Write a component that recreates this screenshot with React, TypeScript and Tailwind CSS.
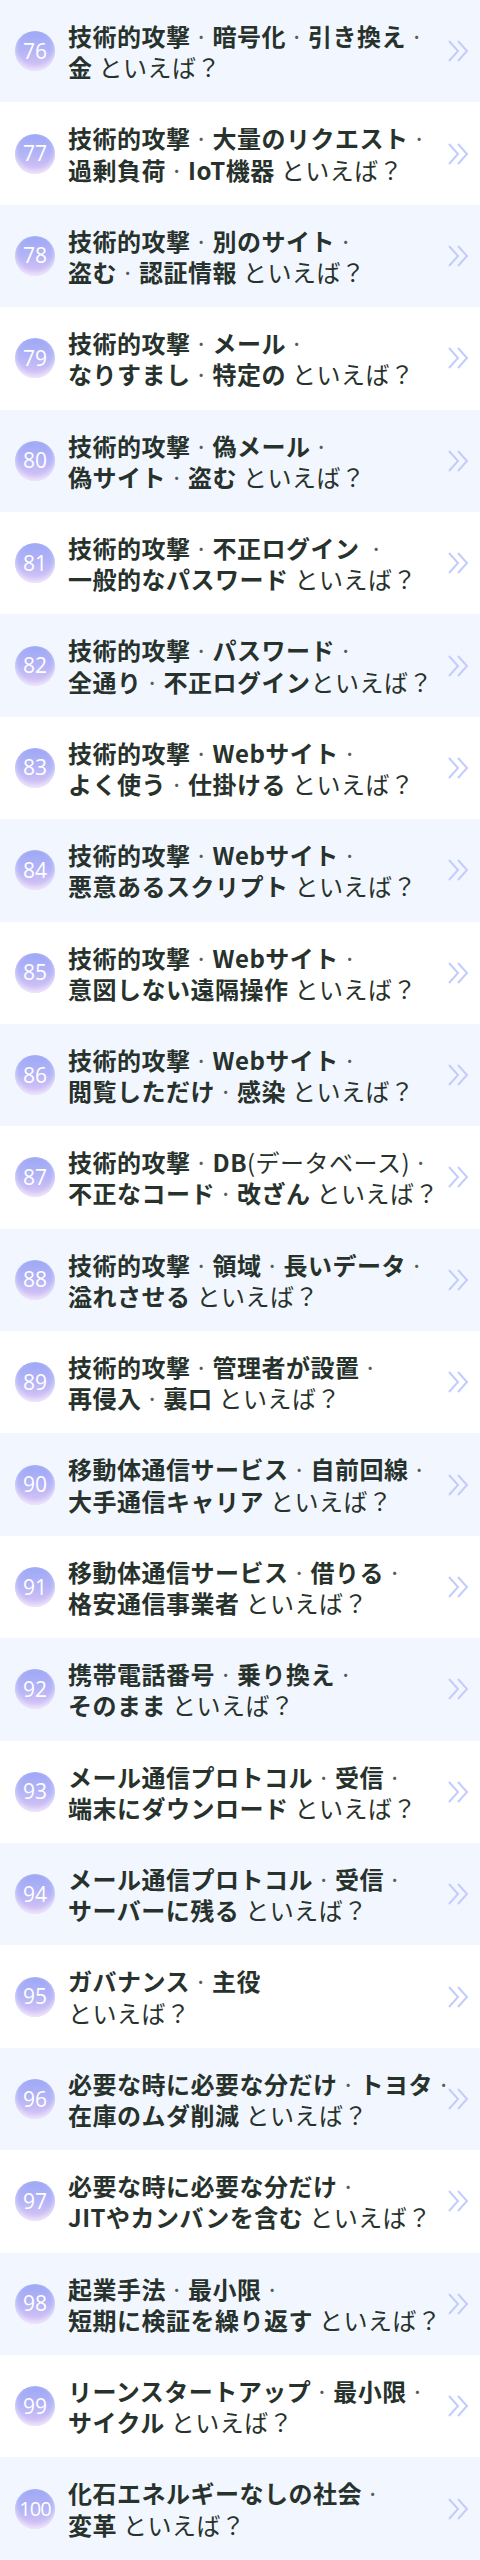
import { Fragment } from "react";

// "**bold**" segments, "\n" = line break
const items: string[] = [
  "**技術的攻撃**・**暗号化**・**引き換え**・\n**金** といえば？",
  "**技術的攻撃**・**大量のリクエスト**・\n**過剰負荷**・**IoT機器** といえば？",
  "**技術的攻撃**・**別のサイト**・\n**盗む**・**認証情報** といえば？",
  "**技術的攻撃**・**メール**・\n**なりすまし**・**特定の** といえば？",
  "**技術的攻撃**・**偽メール**・\n**偽サイト**・**盗む** といえば？",
  "**技術的攻撃**・**不正ログイン** ・\n**一般的なパスワード** といえば？",
  "**技術的攻撃**・**パスワード**・\n**全通り**・**不正ログイン**といえば？",
  "**技術的攻撃**・**Webサイト**・\n**よく使う**・**仕掛ける** といえば？",
  "**技術的攻撃**・**Webサイト**・\n**悪意あるスクリプト** といえば？",
  "**技術的攻撃**・**Webサイト**・\n**意図しない遠隔操作** といえば？",
  "**技術的攻撃**・**Webサイト**・\n**閲覧しただけ**・**感染** といえば？",
  "**技術的攻撃**・**DB**(データベース)・\n**不正なコード**・**改ざん** といえば？",
  "**技術的攻撃**・**領域**・**長いデータ**・\n**溢れさせる** といえば？",
  "**技術的攻撃**・**管理者が設置**・\n**再侵入**・**裏口** といえば？",
  "**移動体通信サービス**・**自前回線**・\n**大手通信キャリア** といえば？",
  "**移動体通信サービス**・**借りる**・\n**格安通信事業者** といえば？",
  "**携帯電話番号**・**乗り換え**・\n**そのまま** といえば？",
  "**メール通信プロトコル**・**受信**・\n**端末にダウンロード** といえば？",
  "**メール通信プロトコル**・**受信**・\n**サーバーに残る** といえば？",
  "**ガバナンス**・**主役**\nといえば？",
  "**必要な時に必要な分だけ**・**トヨタ**・\n**在庫のムダ削減** といえば？",
  "**必要な時に必要な分だけ**・\n**JITやカンバンを含む** といえば？",
  "**起業手法**・**最小限**・\n**短期に検証を繰り返す** といえば？",
  "**リーンスタートアップ**・**最小限**・\n**サイクル** といえば？",
  "**化石エネルギーなしの社会**・\n**変革** といえば？",
];

function Dot() {
  return (
    <span className="inline-block w-[22px] text-center font-normal text-[#555c58]">
      ·
    </span>
  );
}

function Plain({ text }: { text: string }) {
  const bits = text.split("・");
  return (
    <>
      {bits.map((b, i) => (
        <Fragment key={i}>
          {i > 0 && <Dot />}
          <span className="font-normal">{b}</span>
        </Fragment>
      ))}
    </>
  );
}

function Line({ text }: { text: string }) {
  const parts = text.split("**");
  return (
    <span className="block whitespace-nowrap">
      {parts.map((p, i) =>
        i % 2 === 1 ? (
          <strong key={i} className="font-bold">
            {p}
          </strong>
        ) : (
          <Plain key={i} text={p} />
        )
      )}
    </span>
  );
}

function Chevrons() {
  return (
    <svg viewBox="0 0 24 24" className="w-[24px] h-[24px]" fill="none">
      <path d="M3 2l9 10-9 10" stroke="#c3ccfb" strokeWidth="2" />
      <path d="M12 2l9 10-9 10" stroke="#c3ccfb" strokeWidth="2" />
    </svg>
  );
}

export default function App() {
  return (
    <div className="w-[480px] font-['Noto_Sans_CJK_JP','Noto_Sans',sans-serif] text-[#28322c]">
      <ul>
        {items.map((item, idx) => {
          const num = 76 + idx;
          return (
            <li
              key={num}
              className={
                idx % 2 === 0
                  ? "flex items-center h-[102.4px] pl-[15px] pr-[10px] bg-[#f2f7ff]"
                  : "flex items-center h-[102.4px] pl-[15px] pr-[10px] bg-white"
              }
            >
              <div className="size-10 shrink-0 rounded-full bg-gradient-to-b from-[#9ea8f6] via-[#b4b4f6] to-[#dcc6f5] shadow-[inset_0_-3px_5px_rgba(255,255,255,0.6)] flex items-center justify-center">
                <span
                  className={
                    num >= 100
                      ? "font-['Open_Sans',sans-serif] text-[20px] leading-none text-white tracking-[-1px]"
                      : "font-['Open_Sans',sans-serif] text-[21px] leading-none text-white"
                  }
                >
                  {num}
                </span>
              </div>
              <p className="ml-[13px] flex-1 min-w-0 text-[24px] leading-[1.3] tracking-[0.5px]">
                {item.split("\n").map((l, i) => (
                  <Line key={i} text={l} />
                ))}
              </p>
              <div className="shrink-0 w-[26px] flex justify-end">
                <Chevrons />
              </div>
            </li>
          );
        })}
      </ul>
    </div>
  );
}
